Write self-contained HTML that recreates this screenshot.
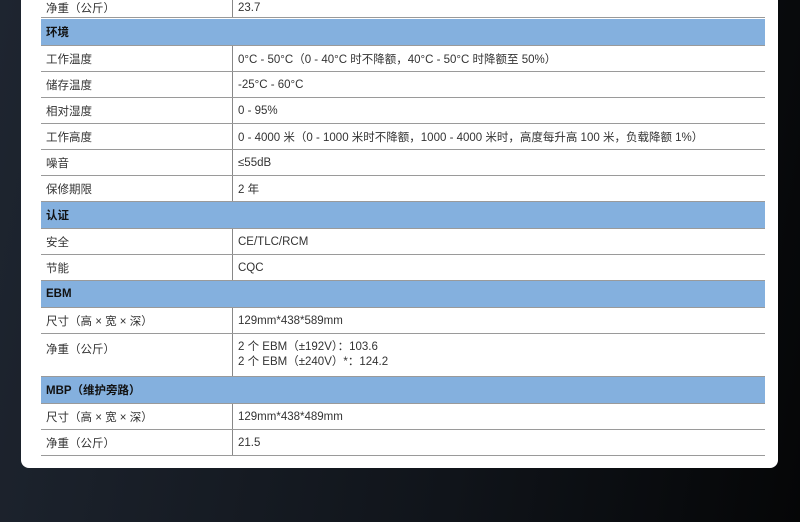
<!DOCTYPE html><html><head><meta charset="utf-8"><style>
body{margin:0;width:800px;height:522px;overflow:hidden;background:linear-gradient(100deg,#1e2530 0%,#10141a 60%,#050607 100%);font-family:"Liberation Sans","Noto Sans CJK SC",sans-serif;}
.panel{position:absolute;left:21px;top:-10px;width:757px;height:478px;background:#fff;border-radius:8px;}
.r{position:absolute;left:41px;width:724px;border-bottom:1px solid #9a9a9a;font-size:11.5px;color:#333;display:flex;}
.r .a{width:186px;padding-left:5px;display:flex;align-items:center;}
.r .b{border-left:1px solid #888;padding-left:5px;display:flex;align-items:center;}
.h{position:absolute;left:41px;width:719px;padding-left:5px;background:#84b0de;font-size:11.5px;font-weight:bold;color:#111;border-bottom:1px solid #9a9a9a;display:flex;align-items:center;}
</style></head><body><div class="panel"></div>
<div class="r" style="top:-1px;height:18px"><span class="a">净重（公斤）</span><span class="b">23.7</span></div>
<div class="h" style="top:19px;height:26px">环境</div>
<div class="r" style="top:46px;height:25px"><span class="a">工作温度</span><span class="b">0°C - 50°C（0 - 40°C 时不降额，40°C - 50°C 时降额至 50%）</span></div>
<div class="r" style="top:72px;height:25px"><span class="a">储存温度</span><span class="b">-25°C - 60°C</span></div>
<div class="r" style="top:98px;height:25px"><span class="a">相对湿度</span><span class="b">0 - 95%</span></div>
<div class="r" style="top:124px;height:25px"><span class="a">工作高度</span><span class="b">0 - 4000 米（0 - 1000 米时不降额，1000 - 4000 米时，高度每升高 100 米，负载降额 1%）</span></div>
<div class="r" style="top:150px;height:25px"><span class="a">噪音</span><span class="b">≤55dB</span></div>
<div class="r" style="top:176px;height:25px"><span class="a">保修期限</span><span class="b">2 年</span></div>
<div class="h" style="top:202px;height:26px">认证</div>
<div class="r" style="top:229px;height:25px"><span class="a">安全</span><span class="b">CE/TLC/RCM</span></div>
<div class="r" style="top:255px;height:25px"><span class="a">节能</span><span class="b">CQC</span></div>
<div class="h" style="top:281px;height:26px">EBM</div>
<div class="r" style="top:308px;height:25px"><span class="a">尺寸（高 × 宽 × 深）</span><span class="b">129mm*438*589mm</span></div>
<div class="r" style="top:334px;height:42px"><span class="a" style="align-items:flex-start;padding-top:7px">净重（公斤）</span><span class="b" style="line-height:15px">2 个 EBM（±192V）：103.6<br>2 个 EBM（±240V）*：124.2</span></div>
<div class="h" style="top:377px;height:26px">MBP（维护旁路）</div>
<div class="r" style="top:404px;height:25px"><span class="a">尺寸（高 × 宽 × 深）</span><span class="b">129mm*438*489mm</span></div>
<div class="r" style="top:430px;height:25px"><span class="a">净重（公斤）</span><span class="b">21.5</span></div>
</body></html>
